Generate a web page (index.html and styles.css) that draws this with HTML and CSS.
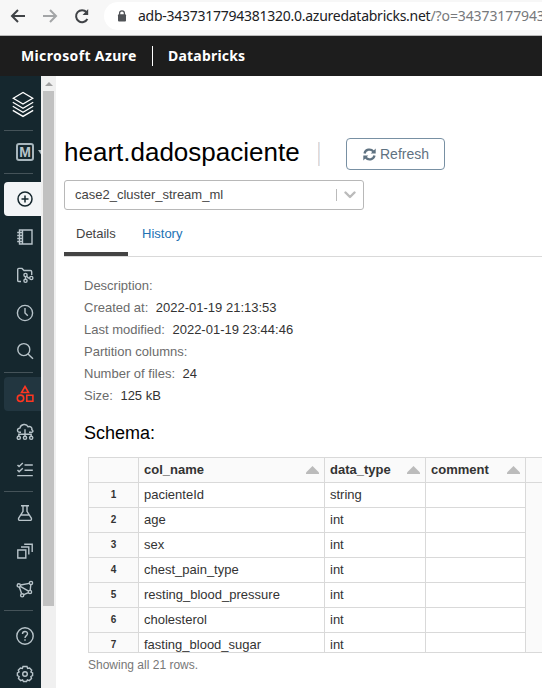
FILE: index.html
```html
<!DOCTYPE html>
<html lang="en">
<head>
<meta charset="utf-8">
<title>heart.dadospaciente - Databricks</title>
<link rel="stylesheet" href="styles.css">
</head>
<body>
<div class="browser">
  <svg class="nav" width="18" height="16" viewBox="0 0 18 16"><path d="M15 8H2M8 2L2 8l6 6"/></svg>
  <svg class="nav forward" width="18" height="16" viewBox="0 0 18 16"><path d="M1 8h13M8 2l6 6-6 6"/></svg>
  <svg class="nav" width="16" height="16" viewBox="0 0 16 16"><path d="M13.4 11A6 6 0 1 1 12.6 4.2"/><path class="solid" d="M14.2 1v6H8.6z"/></svg>
  <div class="address">
    <svg width="10" height="12" viewBox="0 0 10 12"><path d="M2.6 5V3.2a2.4 2.4 0 0 1 4.8 0V5" fill="none" stroke="#505357" stroke-width="1.3"/><rect x="1" y="4.3" width="8" height="7.2" rx="1" fill="#505357"/></svg>
    <span class="url"><span class="host">adb-3437317794381320.0.azuredatabricks.net</span><span class="query">/?o=34373177943</span></span>
  </div>
</div>
<header class="azure"><span class="brand">Microsoft Azure</span><span class="product">Databricks</span></header>
<div class="app">
  <nav class="sidebar">
    <div class="logo"><svg width="22" height="28" viewBox="0 0 22 28"><path d="M1.3 7.2L11 1.500l9.7 5.700L11 13zM.8 11.200l10.200 6 10.200-6M.8 15.300l10.200 6 10.200-6M.8 19.400l10.200 6 10.200-6"/></svg></div>
    <hr>
    <div class="workspace"><span class="letter">M</span><svg width="6" height="5" viewBox="0 0 6 5"><path d="M0 0h6L3 4.5z"/></svg></div>
    <hr>
    <div class="group">
      <div class="item create"><svg viewBox="0 0 18 18"><circle cx="9" cy="9" r="7"/><path d="M9 5.5v7M5.5 9h7"/></svg></div>
      <div class="item"><svg viewBox="0 0 18 18"><path d="M3.500 2h12.500v14h-12.500zM6.500 2v14M1.200 4.500h5M1.200 7.500h5M1.200 10.500h5M1.200 13.500h5"/></svg></div>
      <div class="item"><svg viewBox="0 0 18 18"><path d="M5 15.5H2.8Q1.7 15.5 1.7 14.4V3.6Q1.7 2.4 2.8 2.4H6l2 2.1h6.5q1.2 0 1.2 1.2V9"/><circle cx="9.5" cy="9" r="1.6"/><circle cx="9.5" cy="14.8" r="1.6"/><circle cx="15.3" cy="12" r="1.6"/><path d="M9.5 10.6v2.6M10.6 10.3l1.7 1.7h1.4"/></svg></div>
      <div class="item"><svg viewBox="0 0 18 18"><circle cx="9" cy="9" r="7.6"/><path d="M9 4v5l2.8 2.8"/></svg></div>
      <div class="item"><svg viewBox="0 0 18 18"><circle cx="7.8" cy="7.6" r="6"/><path d="M12 12l5 4.8"/></svg></div>
    </div>
    <hr>
    <div class="group compact">
      <div class="item data"><svg viewBox="0 0 18 18"><path d="M9 1.5l3.5 6h-7zM10.8 10.2h6.1v6.1h-6.1z"/><circle cx="4.5" cy="13.3" r="3.2"/></svg></div>
      <div class="item"><svg viewBox="0 0 18 18"><path d="M5 9.3H3.8C.7 9.3.7 5.4 3.9 5.1 4.7.8 10.6.3 12 3.7c3-.6 4.3 1.1 3.8 2.9 2.1 1.4.8 3-.9 2.7H13M9 6.3v7M2.8 13v-1.8h12.4V13"/><circle cx="2.8" cy="14.8" r="1.6"/><circle cx="9" cy="14.8" r="1.6"/><circle cx="15.2" cy="14.8" r="1.6"/></svg></div>
      <div class="item"><svg viewBox="0 0 18 18"><path d="M1.5 3.9l1.6 1.7L6.8 2M1.5 9.1l1.6 1.7 3.7-3.6M8.5 4h8.3M8.5 9.2h8.3M1.2 14.6h15.6"/></svg></div>
    </div>
    <hr>
    <div class="group compact">
      <div class="item"><svg viewBox="0 0 18 18"><path d="M5 1.8h8M7 2v5.3L2.7 14q-.8 2.4 1.6 2.4h9.4q2.4 0 1.6-2.4L11 7.3V2M5 11h8"/></svg></div>
      <div class="item"><svg viewBox="0 0 18 18"><path d="M1.8 8h8v8h-8zM5 5h7.8v7.6M8.2 2.2h8v7.7"/></svg></div>
      <div class="item"><svg viewBox="0 0 18 18"><circle cx="2.8" cy="5.4" r="1.6"/><circle cx="15" cy="3" r="1.6"/><circle cx="14" cy="12" r="1.6"/><circle cx="6.2" cy="15.300" r="1.6"/><path d="M4.500 5l8.800-1.600M14.800 4.700l-.6 5.600M12.500 12.700l-4.700 2M3.300 7.100l2.300 6.500M4.300 6.300l8.300 4.800"/></svg></div>
    </div>
    <hr>
    <div class="group">
      <div class="item"><svg viewBox="0 0 18 18"><circle cx="9" cy="9" r="8.2"/><path d="M6.5 7c0-3.4 5-3.3 5-.3C11.500 8.700 9 8.600 9 11M9 12.300v1.500"/></svg></div>
      <div class="item"><svg viewBox="0 0 18 18"><circle cx="9" cy="9" r="2.3"/><path d="M7 1.5h4l.6 2 2-.5 2.1 2.2-.8 1.800 1.700 1v2.500l-1.700 1 .6 2-2.200 2.100-1.900-.8-.9 1.700H7.500l-.9-1.700-1.900.8L2.500 13.500l.6-2-1.700-1V8l1.700-1-.8-1.800L4.400 3l2 .5z"/></svg></div>
    </div>
  </nav>
  <div class="scrollbar"><span class="up"></span><span class="thumb"></span></div>
  <main>
    <div class="titlebar">
      <h1>heart.dadospaciente</h1><span class="divider"></span>
      <button class="refresh"><svg width="13" height="13" viewBox="0 0 13 13"><path d="M1.500 5.500A5 5 0 0 1 10.300 3.500M11.500 7.500A5 5 0 0 1 2.700 9.500" fill="none" stroke="#5f7281" stroke-width="2.300"/><path d="M12.700.5v5H7.700zM.3 12.500v-5h5z" fill="#5f7281"/></svg>Refresh</button>
    </div>
    <div class="cluster"><span>case2_cluster_stream_ml</span><i></i><svg width="12" height="8" viewBox="0 0 12 8"><path d="M1.500 1.500L6 6l4.500-4.500"/></svg></div>
    <div class="tabs"><span class="tab active">Details</span><span class="tab">History</span></div>
    <section class="details">
      <dl>
        <div><dt>Description:</dt></div>
        <div><dt>Created at:</dt><dd>2022-01-19 21:13:53</dd></div>
        <div><dt>Last modified:</dt><dd>2022-01-19 23:44:46</dd></div>
        <div><dt>Partition columns:</dt></div>
        <div><dt>Number of files:</dt><dd>24</dd></div>
        <div><dt>Size:</dt><dd>125 kB</dd></div>
      </dl>
      <h2>Schema:</h2>
      <div class="grid">
        <div class="row head"><b></b><span>col_name<i></i></span><span>data_type<i></i></span><span>comment<i></i></span><em></em></div>
        <div class="row"><b>1</b><span>pacienteId</span><span>string</span><span></span></div>
        <div class="row"><b>2</b><span>age</span><span>int</span><span></span></div>
        <div class="row"><b>3</b><span>sex</span><span>int</span><span></span></div>
        <div class="row"><b>4</b><span>chest_pain_type</span><span>int</span><span></span></div>
        <div class="row"><b>5</b><span>resting_blood_pressure</span><span>int</span><span></span></div>
        <div class="row"><b>6</b><span>cholesterol</span><span>int</span><span></span></div>
        <div class="row"><b>7</b><span>fasting_blood_sugar</span><span>int</span><span></span></div>
      </div>
      <p class="count">Showing all 21 rows.</p>
    </section>
  </main>
</div>
</body>
</html>
```
FILE: styles.css
```css
* { box-sizing: border-box; }
body { margin: 0; width: 542px; height: 688px; overflow: hidden; background: #fff; font: 13px/20px "Liberation Sans", Arial, sans-serif; color: #333; }
h1, h2, dl, dd, p { margin: 0; font-weight: normal; }
svg { flex: none; }

.browser { display: flex; align-items: center; height: 36px; padding: 0 0 4px 10px; background: #f7f7f7; border-bottom: 1px solid #b9b9b9; }
.nav { margin-right: 14px; fill: none; stroke: #404347; stroke-width: 2; }
.nav.forward { stroke: #a3a5a7; }
.nav .solid { fill: #404347; stroke: none; }
.address { display: flex; align-items: center; flex: 1; height: 28px; padding-left: 13px; overflow: hidden; background: #fff; border-radius: 14px 0 0 14px; }
.url { margin-left: 11px; font: 14px/28px "Noto Sans", sans-serif; white-space: nowrap; }
.host { color: #202124; letter-spacing: -0.26px; }
.query { color: #77797c; letter-spacing: -0.1px; }

.azure { display: flex; align-items: center; height: 40px; padding-left: 21px; background: #1d1d1d; color: #fff; font: bold 14px/20px "Noto Sans", sans-serif; white-space: nowrap; }
.brand { width: 132px; height: 20px; border-right: 1px solid #fff; letter-spacing: 0.36px; }
.product { margin-left: 15px; letter-spacing: 0.2px; }

.app { display: flex; height: 612px; }
.sidebar { width: 41px; flex: none; background: #15272e; overflow: hidden; }
.sidebar hr { height: 1px; width: 29px; margin: 0 0 0 4px; border: 0; background: #455359; }
.sidebar svg { fill: none; stroke: #b8c4ca; stroke-width: 1.4; }
.logo { height: 54px; padding: 15px 0 0 12px; }
.logo svg { display: block; stroke: #fff; stroke-width: 1.3; }
.workspace { display: flex; align-items: center; height: 42px; padding-left: 16px; }
.letter { width: 18px; height: 18px; flex: none; border: 2px solid #a8b6bd; border-radius: 3px; font: bold 14px/14px "Liberation Sans", Arial, sans-serif; text-align: center; color: #b8c4ca; }
.workspace svg { margin-left: 4px; fill: #a8b6bd; stroke: none; }
.group { display: grid; gap: 4px; padding: 8px 0 4px 4px; }
.group.compact { padding-top: 4px; }
.item { display: flex; align-items: center; height: 34px; padding-left: 12px; border-radius: 4px 0 0 4px; }
.item svg { width: 18px; height: 18px; }
.create { background: #f3f5f7; }
.create svg { stroke: #15272e; stroke-width: 1.5; }
.data { background: #223640; }
.data svg { stroke: #ff3621; stroke-width: 1.6; }

.scrollbar { display: flex; flex-direction: column; align-items: center; width: 15px; flex: none; background: #f0f0f0; }
.up { margin-top: 6px; border: 4px solid transparent; border-top: 0; border-bottom-color: #a0a0a0; }
.thumb { width: 11px; height: 515px; margin-top: 5px; background: #c1c1c1; }

main { flex: 1; min-width: 0; padding: 62px 0 0 8px; }
.titlebar { display: flex; height: 32px; }
h1 { width: 254px; font-size: 26px; line-height: 29px; color: #000; white-space: nowrap; }
.divider { width: 2px; height: 24px; margin: 4px 0 0; background: linear-gradient(90deg, #e6d9d6 50%, #dbe5ee 50%); }
.refresh { display: flex; align-items: center; gap: 4px; width: 99px; height: 32px; margin-left: 26px; padding: 0 0 0 16px; border: 1px solid #7890a3; border-radius: 4px; background: #fff; font: 14px/20px "Liberation Sans", Arial, sans-serif; color: #5f7281; }
.cluster { display: flex; align-items: center; width: 300px; height: 30px; margin-top: 10px; padding-left: 10px; border: 1px solid #b8b8b8; border-radius: 3px; color: #444; }
.cluster span { width: 261px; }
.cluster i { width: 1px; height: 12px; background: #bbb; }
.cluster svg { margin-left: 7px; fill: none; stroke: #bbb; stroke-width: 2.4; stroke-linecap: round; stroke-linejoin: round; }
.tabs { display: flex; height: 47px; border-bottom: 1px solid #d9d9d9; }
.tab { height: 46px; padding: 14px 14px 0; color: #2272b4; }
.tab.active { width: 64px; padding: 14px 0 0 12px; border-bottom: 4px solid #444; color: #444; }

.details { padding: 18px 0 0 20px; }
dl div { display: flex; gap: 7.5px; height: 22px; line-height: 22px; }
dt { color: #6b6b6b; }
dd { color: #333; }
h2 { height: 26px; margin-top: 13px; font-size: 18px; line-height: 26px; color: #000; }
.grid { height: 196px; margin: 11px 0 0 4px; overflow: hidden; background: #fafafa; border: 1px solid #d9d9d9; border-right: 0; }
.row { display: grid; grid-template-columns: 50px 186px 101px 100px 1fr; height: 25px; line-height: 24px; }
.row b, .row span { height: 25px; border: solid #d9d9d9; border-width: 0 1px 1px 0; }
.row b { font-size: 10px; line-height: 23px; text-align: center; background: #fafafa; }
.row span { display: flex; justify-content: space-between; padding: 0 5px; background: #fff; }
.row.head span { background: #fafafa; font-weight: bold; }
.head em { border-bottom: 1px solid #d9d9d9; }
.head i { margin-top: 8px; width: 13px; height: 8px; background: #bbb; clip-path: polygon(50% 0, 100% 80%, 100% 100%, 0 100%, 0 80%); }
.count { margin: 2px 0 0 4px; font-size: 12px; color: #777; }
```
